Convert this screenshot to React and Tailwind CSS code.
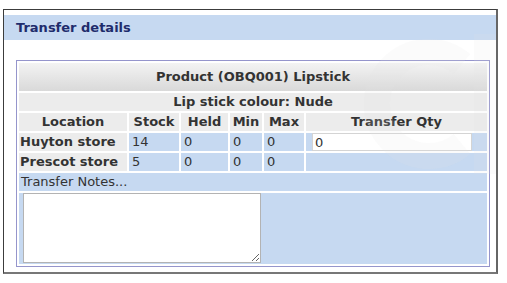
import React from "react";

const rows = [
  { name: "Huyton store", stock: 14, held: 0, min: 0, max: 0, qty: true },
  { name: "Prescot store", stock: 5, held: 0, min: 0, max: 0, qty: false },
];

export default function App() {
  return (
    <div className="w-[507px] h-[283px] bg-white pt-[9px] pl-[3px] font-['DejaVu_Sans',Verdana,sans-serif] text-[13px] leading-[16px] text-[#333]">
      <div className="relative w-[495px] h-[265px] overflow-hidden border-t border-l border-[#3c3c3c] border-r-2 border-b-2 border-r-[#666] border-b-[#777] pt-[5px]">
        {/* faint watermark logo */}
        <svg
          className="pointer-events-none absolute left-[360px] top-[14px] z-10"
          width="140"
          height="160"
          viewBox="0 0 140 160"
        >
          <path
            d="M98 40 A52 52 0 1 0 98 120"
            fill="none"
            stroke="#e6e6e6"
            strokeOpacity="0.15"
            strokeWidth="26"
          />
          <path
            d="M122 10 V150"
            fill="none"
            stroke="#e6e6e6"
            strokeOpacity="0.15"
            strokeWidth="24"
          />
        </svg>

        {/* Header */}
        <div className="h-[25px] bg-[#c6d9f1] flex items-center pl-3 font-bold text-[#1f2c6c]">
          Transfer details
        </div>

        {/* Table */}
        <div className="mt-5 ml-3 w-[474px] border border-[#9595cc]">
          <table className="w-full table-fixed border-separate border-spacing-[2px]">
            <colgroup>
              <col className="w-[108px]" />
              <col className="w-[50px]" />
              <col className="w-[47px]" />
              <col className="w-[32px]" />
              <col className="w-[40px]" />
              <col />
            </colgroup>
            <tbody>
              <tr>
                <td
                  colSpan={6}
                  className="h-[28px] p-0 text-center font-bold bg-gradient-to-b from-[#f3f3f3] to-[#d9d9d9]"
                >
                  Product (OBQ001) Lipstick
                </td>
              </tr>
              <tr>
                <td colSpan={6} className="h-[18px] p-0 text-center font-bold bg-[#ececec]">
                  Lip stick colour: Nude
                </td>
              </tr>
              <tr className="font-bold">
                <td className="h-[18px] p-0 text-center bg-[#ececec]">Location</td>
                <td className="p-0 text-center bg-[#ececec]">Stock</td>
                <td className="p-0 text-center bg-[#ececec]">Held</td>
                <td className="p-0 text-center bg-[#ececec]">Min</td>
                <td className="p-0 text-center bg-[#ececec]">Max</td>
                <td className="p-0 text-center bg-[#ececec]">Transfer Qty</td>
              </tr>
              {rows.map((r) => (
                <tr key={r.name}>
                  <td className="h-[18px] py-0 px-[1px] font-bold bg-[#ececec] whitespace-nowrap">{r.name}</td>
                  <td className="py-0 px-[3px] bg-[#c6d9f1]">{r.stock}</td>
                  <td className="py-0 px-[3px] bg-[#c6d9f1]">{r.held}</td>
                  <td className="py-0 px-[3px] bg-[#c6d9f1]">{r.min}</td>
                  <td className="py-0 px-[3px] bg-[#c6d9f1]">{r.max}</td>
                  <td className="py-0 pl-[6px] pr-[15px] bg-[#c6d9f1]">
                    {r.qty && (
                      <input
                        defaultValue="0"
                        className="block w-full h-[18px] px-[2px] bg-white border border-[#d4d4d4] text-[13px] text-[#333] outline-none"
                      />
                    )}
                  </td>
                </tr>
              ))}
              <tr>
                <td colSpan={6} className="h-[18px] py-0 px-[2px] bg-[#c6d9f1]">
                  Transfer Notes...
                </td>
              </tr>
              <tr>
                <td colSpan={6} className="h-[70px] pl-[4px] pr-0 pt-0 pb-[1px] bg-[#c6d9f1] align-top">
                  <textarea className="block w-[238px] h-[70px] bg-white border border-[#b3b3b3] resize outline-none" />
                </td>
              </tr>
            </tbody>
          </table>
        </div>
      </div>
    </div>
  );
}
